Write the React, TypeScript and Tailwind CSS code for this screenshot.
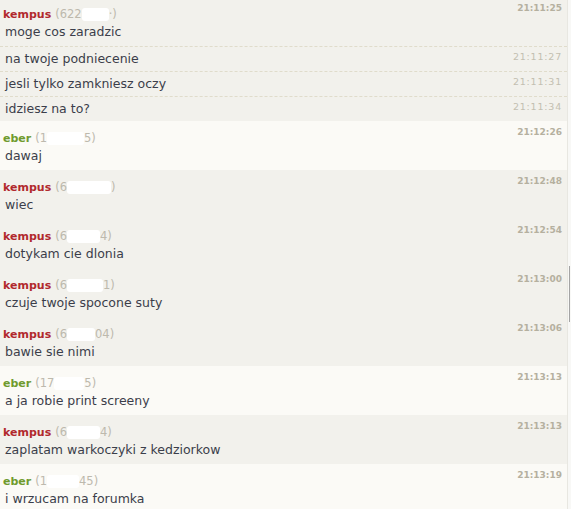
import React from 'react'

interface Line {
  text: string
  time: string
}

interface Group {
  user: 'kempus' | 'eber'
  idStart: string
  idMask: number
  idEnd: string
  lines: Line[]
}

const groups: Group[] = [
  {
    user: 'kempus',
    idStart: '(622',
    idMask: 27,
    idEnd: '·)',
    lines: [
      { text: 'moge cos zaradzic', time: '21:11:25' },
      { text: 'na twoje podniecenie', time: '21:11:27' },
      { text: 'jesli tylko zamkniesz oczy', time: '21:11:31' },
      { text: 'idziesz na to?', time: '21:11:34' },
    ],
  },
  { user: 'eber', idStart: '(1', idMask: 37, idEnd: '5)', lines: [{ text: 'dawaj', time: '21:12:26' }] },
  { user: 'kempus', idStart: '(6', idMask: 44, idEnd: ')', lines: [{ text: 'wiec', time: '21:12:48' }] },
  { user: 'kempus', idStart: '(6', idMask: 33, idEnd: '4)', lines: [{ text: 'dotykam cie dlonia', time: '21:12:54' }] },
  { user: 'kempus', idStart: '(6', idMask: 36, idEnd: '1)', lines: [{ text: 'czuje twoje spocone suty', time: '21:13:00' }] },
  { user: 'kempus', idStart: '(6', idMask: 28, idEnd: '04)', lines: [{ text: 'bawie sie nimi', time: '21:13:06' }] },
  { user: 'eber', idStart: '(17', idMask: 30, idEnd: '5)', lines: [{ text: 'a ja robie print screeny', time: '21:13:13' }] },
  { user: 'kempus', idStart: '(6', idMask: 33, idEnd: '4)', lines: [{ text: 'zaplatam warkoczyki z kedziorkow', time: '21:13:13' }] },
  { user: 'eber', idStart: '(1', idMask: 32, idEnd: '45)', lines: [{ text: 'i wrzucam na forumka', time: '21:13:19' }] },
]

function ChatGroup({ group }: { group: Group }) {
  const [first, ...rest] = group.lines
  const isEber = group.user === 'eber'

  return (
    <div className={isEber ? 'bg-[#fbfaf6]' : 'bg-[#f2f1ec]'}>
      <div className="pt-[9px] pb-[5px]">
        <div className="flex justify-between items-start h-[17px]">
          <div className="pl-[3px] leading-[17px] flex items-center whitespace-nowrap">
            <span
              className={
                'text-[11px] font-bold ' + (isEber ? 'text-[#6f9a2e]' : 'text-[#b1292d]')
              }
            >
              {group.user}
            </span>
            <span className="ml-[4px] text-[11.5px] text-[#bdb9ad]">{group.idStart}</span>
            <span
              className="inline-block h-[13px] bg-white rounded-[3px] blur-[0.6px]"
              style={{ width: group.idMask }}
            />
            <span className="text-[11.5px] text-[#bdb9ad]">{group.idEnd}</span>
          </div>
          <span className="pr-[5px] -mt-[3px] text-[9px] leading-[11px] font-bold text-[#b5b09f]">
            {first.time}
          </span>
        </div>
        <div className="pl-[5px] h-[18px] leading-[18px] text-[12.5px] text-[#3b3e4a]">
          {first.text}
        </div>
      </div>

      {rest.map((line) => (
        <div
          key={line.time}
          className="border-t border-dashed border-[#e0dccb] h-[25px] flex justify-between items-start"
        >
          <span className="pl-[5px] leading-[24px] text-[12.5px] text-[#3b3e4a]">{line.text}</span>
          <span className="pr-[5px] mt-[4px] text-[9.5px] leading-[11px] tracking-[0.8px] text-[#c3bfb1]">
            {line.time}
          </span>
        </div>
      ))}
    </div>
  )
}

export default function App() {
  return (
    <div
      className="w-[571px] h-[509px] overflow-hidden flex bg-white"
      style={{ fontFamily: '"DejaVu Sans", Verdana, sans-serif' }}
    >
      <div className="w-[567px] -mt-[3px] flex flex-col">
        {groups.map((group, i) => (
          <ChatGroup key={i} group={group} />
        ))}
      </div>
      <div className="w-[4px] h-full bg-[#f8f8f6] border-l border-[#e8e7e1] flex flex-col">
        <div className="ml-[1px] mt-[266px] w-px h-[56px] bg-[#a4a4a4]" />
      </div>
    </div>
  )
}
